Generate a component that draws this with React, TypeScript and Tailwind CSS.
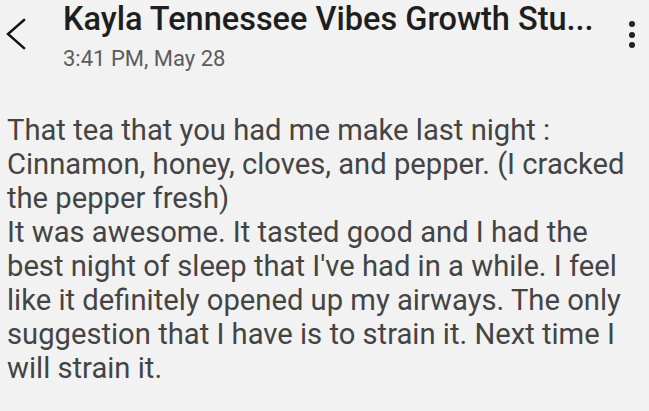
import React from 'react';

const BackIcon = () => (
  <svg width="22" height="32" viewBox="0 0 22 32" fill="none">
    <path d="M19 2 L3 16 L19 30" stroke="#111" strokeWidth="2.4" strokeLinecap="square" />
  </svg>
);

const MoreIcon = () => (
  <div className="flex flex-col gap-[4.5px] items-center">
    <span className="w-[6px] h-[6px] rounded-full bg-[#222]" />
    <span className="w-[6px] h-[6px] rounded-full bg-[#222]" />
    <span className="w-[6px] h-[6px] rounded-full bg-[#222]" />
  </div>
);

export default function App() {
  return (
    <div
      className="w-[649px] h-[411px] bg-[#f2f2f2] overflow-hidden"
      style={{ fontFamily: 'Roboto, "Noto Sans", sans-serif' }}
    >
      <div className="flex items-start">
        <div className="w-[63px] pl-[5px] pt-[18px]">
          <BackIcon />
        </div>
        <div className="flex-1 min-w-0">
          <div className="text-[32.5px] leading-[38px] text-[#1e1e1e] font-medium whitespace-nowrap">
            Kayla Tennessee Vibes Growth Stu...
          </div>
          <div className="text-[22px] leading-[26px] mt-[8px] text-[#5c5c5c]">3:41 PM, May 28</div>
        </div>
        <div className="w-[40px] flex justify-center pt-[21px] pl-[5px]">
          <MoreIcon />
        </div>
      </div>
      <p className="mt-[41px] pl-[7px] pr-[12px] text-[29.2px] leading-[34px] text-[#444]">
        That tea that you had me make last night : Cinnamon, honey, cloves, and pepper. (I cracked the pepper fresh)
        <br />
        It was awesome. It tasted good and I had the best night of sleep that I've had in a while. I feel like it definitely opened up my airways. The only suggestion that I have is to strain it. Next time I will strain it.
      </p>
    </div>
  );
}
